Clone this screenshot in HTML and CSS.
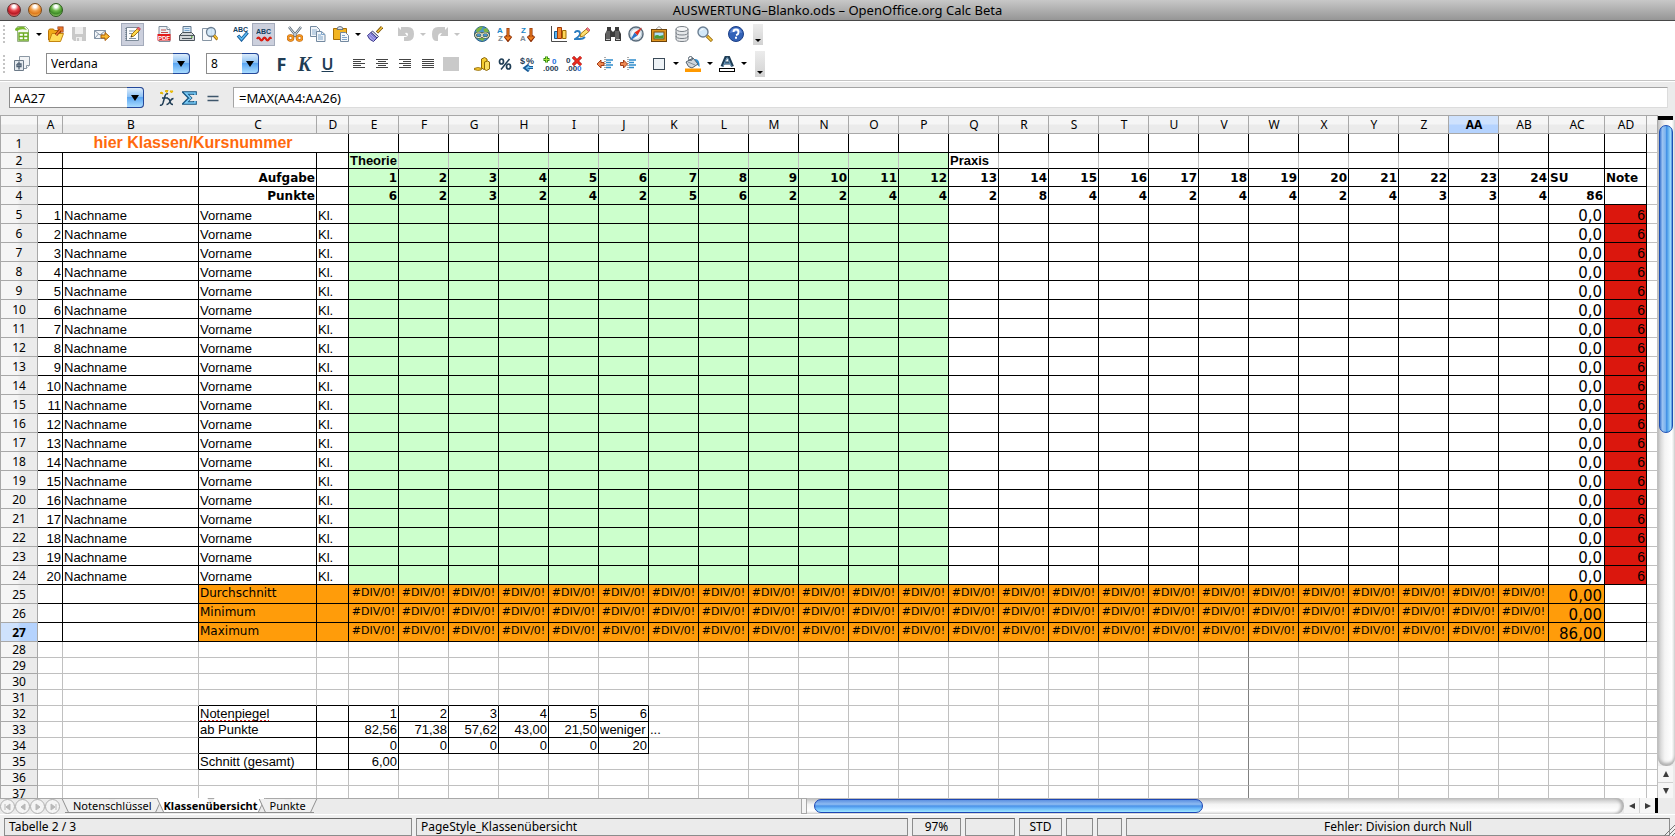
FILE: index.html
```html
<!DOCTYPE html>
<html lang="de">
<head>
<meta charset="utf-8">
<title>AUSWERTUNG–Blanko.ods – OpenOffice.org Calc Beta</title>
<link rel="stylesheet" href="styles.css">
</head>
<body>
<div class="window">
  <header class="titlebar">
    <div class="lights">
      <button class="light light-close" aria-label="Schließen"></button>
      <button class="light light-min" aria-label="Minimieren"></button>
      <button class="light light-max" aria-label="Maximieren"></button>
    </div>
    <h1 class="title">AUSWERTUNG–Blanko.ods – OpenOffice.org Calc Beta</h1>
  </header>

  <div class="toolbars">
    <div class="toolbar toolbar-standard" role="toolbar" aria-label="Standard">
      <span class="grip"></span>
      <button class="tool" aria-label="Neu"><svg viewBox="0 0 16 16"><path d="M1 3q2-3 6-2l-1 2q-3-1-4 2z" fill="#6fae2e"/><path d="M3.500.500h8l3 3v12h-11z" fill="#f4f8f0" stroke="#9ab08a"/><path d="M1 4q3-4 9-3l3 3q-6-2-10 1z" fill="#78b82a"/><path d="M5 7h9v7H5zM5 10.500h9M9.500 7v7" fill="#fff" stroke="#6cab22" stroke-width="1.400"/></svg></button>
      <button class="drop" aria-label="Neu Auswahl"></button>
      <button class="tool" aria-label="Öffnen"><svg viewBox="0 0 16 16"><path d="M.500 14V4.500l1-1.500h4l1 1.500h6V14z" fill="#f0a818" stroke="#b87408"/><path d="M1 15.500l3-8h11.500l-3 8z" fill="#ffdc58" stroke="#c48510"/><path d="M8 9l5-6M9.500 2H14v4.500" fill="none" stroke="#8e2a06" stroke-width="3"/><path d="M8 9l5-6M10 2h4v4" fill="none" stroke="#ef7d2c" stroke-width="1.500"/></svg></button>
      <button class="tool" aria-label="Speichern" disabled><svg viewBox="0 0 16 16"><path d="M1 1h14v14H3l-2-2z" fill="#c9c9c9"/><path d="M4 1h8v7H4zM5 11h6v4H5z" fill="#efefef"/><path d="M6 12h2v3H6z" fill="#c9c9c9"/></svg></button>
      <button class="tool" aria-label="E-Mail"><svg viewBox="0 0 16 16"><path d="M.500 4.500h11v8H.500z" fill="#f2f5f8" stroke="#8393a5"/><path d="M.500 4.500L6 9l5.500-4.500M.500 12.500L4.500 8M11.500 12.500L7.500 8" fill="none" stroke="#8393a5"/><path d="M7 9h4V6.500l4.500 4-4.500 4V12H7z" fill="#f9b932" stroke="#a65a08"/></svg></button>
      <span class="gap"></span>
      <button class="tool is-on" aria-label="Bearbeiten" aria-pressed="true"><svg viewBox="0 0 16 16"><path d="M1.500 1.500h12v13h-12z" fill="#fbfcfd" stroke="#7d8b99"/><path d="M4 5h6M4 7.500h4M4 12.500h7" stroke="#8492a0"/><path d="M1 2v13" stroke="#596878" stroke-dasharray="1 1"/><path d="M6 11l1-3 6-6 2 2-6 6z" fill="#ffd84a" stroke="#a87710"/><path d="M12 2.500l1.500-1.500 2 2L14 4.500z" fill="#ef6a78" stroke="#a82a3c" stroke-width=".600"/><path d="M5.500 11.500l1-2 1 1z" fill="#333"/></svg></button>
      <span class="gap"></span>
      <button class="tool" aria-label="Als PDF exportieren"><svg viewBox="0 0 16 16"><path d="M3 .500h8l3 3v12H3z" fill="#eef1f4" stroke="#7f8e9d"/><path d="M11 .500v3h3" fill="#fff" stroke="#7f8e9d"/><path d="M5 4h5M5 6.500h7" stroke="#c04a4a"/><rect x="1.500" y="8" width="13" height="6.500" fill="#e21b1b"/><text x="2" y="13.500" class="glyph-pdf">PDF</text></svg></button>
      <button class="tool" aria-label="Drucken"><svg viewBox="0 0 16 16"><path d="M4 7V.500h8V7" fill="#dbe9f5" stroke="#63798d"/><path d="M5.500 2.500h5M5.500 4.500h5" stroke="#7ba7cf"/><path d="M.500 9.500l3-3h9l3 3v5H.500z" fill="#d3d6d9" stroke="#4b545c"/><path d="M.500 9.500h15M3 12.500h10" stroke="#4b545c"/><path d="M12 11h1.500" stroke="#4ca82a" stroke-width="1.500"/></svg></button>
      <button class="tool" aria-label="Seitenansicht"><svg viewBox="0 0 16 16"><path d="M.500 2.500h9v12h-9z" fill="#f6f8fa" stroke="#8695a4"/><circle cx="9" cy="6" r="4.500" fill="#cfe5f7" fill-opacity=".900" stroke="#6c7f92" stroke-width="1.300"/><path d="M12 9.500l3.500 4" stroke="#9c6a08" stroke-width="3"/><path d="M12.300 9.500l3 3.500" stroke="#f6c53a" stroke-width="1.500"/></svg></button>
      <span class="gap"></span>
      <button class="tool" aria-label="Rechtschreibung"><svg viewBox="0 0 16 16"><text x="0" y="6" class="glyph-abc">ABC</text><path d="M5 9.500l3.500 4 6-7" fill="none" stroke="#145c9c" stroke-width="3.400"/><path d="M5.500 10l3 3.300 5.500-6.300" fill="none" stroke="#5db9f0" stroke-width="1.700"/></svg></button>
      <button class="tool is-on" aria-label="Automatische Rechtschreibprüfung" aria-pressed="true"><svg viewBox="0 0 16 16"><text x="0" y="8" class="glyph-abc">ABC</text><path d="M1 13q1.500-3 3 0t3 0 3 0 3 0 2 0" fill="none" stroke="#d81e12" stroke-width="2.200"/></svg></button>
      <span class="gap"></span>
      <button class="tool" aria-label="Ausschneiden"><svg viewBox="0 0 16 16"><path d="M2 1l8 10M14 1L6 11" stroke="#5c6b78" stroke-width="2.400"/><path d="M2 1l8 10M14 1L6 11" stroke="#dde6ed"/><circle cx="3.500" cy="12" r="2.500" fill="none" stroke="#b95d06" stroke-width="2.600"/><circle cx="12.500" cy="12" r="2.500" fill="none" stroke="#b95d06" stroke-width="2.600"/><circle cx="3.500" cy="12" r="2.500" fill="none" stroke="#f59a24" stroke-width="1.400"/><circle cx="12.500" cy="12" r="2.500" fill="none" stroke="#f59a24" stroke-width="1.400"/></svg></button>
      <button class="tool" aria-label="Kopieren"><svg viewBox="0 0 16 16"><path d="M.500.500h6l3 3v7h-9z" fill="#f1f5f9" stroke="#7389a0"/><path d="M2 4h5M2 6h5M2 8h4" stroke="#8fb0d0"/><path d="M6.500 5.500h5l3.500 3v7H6.500z" fill="#f1f5f9" stroke="#7389a0"/><path d="M11.500 5.500v3H15M8 9h3M8 11h5M8 13h5" fill="none" stroke="#7fa5ca"/></svg></button>
      <button class="tool" aria-label="Einfügen"><svg viewBox="0 0 16 16"><path d="M.500 2.500h13v11H.500z" fill="#f2b422" stroke="#a66d06"/><path d="M4 3.500q0-3 3-3t3 3z" fill="#dfe3e7" stroke="#68747f"/><path d="M7.500 6.500h5l3 3v6h-8z" fill="#f5f8fa" stroke="#7389a0"/><path d="M9 9.500h3M9 11.500h5M9 13.500h5" stroke="#7fa5ca"/></svg></button>
      <button class="drop" aria-label="Einfügen Auswahl"></button>
      <button class="tool" aria-label="Format übertragen"><svg viewBox="0 0 16 16"><path d="M10 6.500L15 1" stroke="#7b5208" stroke-width="3"/><path d="M10.500 6L15 1.200" stroke="#f6c73c" stroke-width="1.400"/><path d="M5.500 5l6 5.500-1.500 1.500-6-5.500z" fill="#d8dce6" stroke="#3d3f78"/><path d="M4 6.500l6 5.500-3.500 3.500Q2 14 .500 9.500z" fill="#a9a6ee" stroke="#383488"/><path d="M2.500 9l5 5M4 8l5 4.500" stroke="#6f6bc8"/></svg></button>
      <span class="gap"></span>
      <button class="tool" aria-label="Rückgängig" disabled><svg viewBox="0 0 16 16"><path d="M0 1l3 3V1h7q6 0 6 7t-6 7H6v-4h1q3 0 3-3-1-2-3-1l2 3H0z" fill="#c8c8c8"/></svg></button>
      <button class="drop is-off" aria-label="Rückgängig Auswahl" disabled></button>
      <button class="tool" aria-label="Wiederherstellen" disabled><svg viewBox="0 0 16 16"><path d="M16 1l-3 3V1H6Q0 1 0 8t4 7h2v-4q0-4 4-4L8 10h8z" fill="#c8c8c8"/></svg></button>
      <button class="drop is-off" aria-label="Wiederherstellen Auswahl" disabled></button>
      <span class="gap"></span>
      <button class="tool" aria-label="Hyperlink"><svg viewBox="0 0 16 16"><circle cx="8" cy="8" r="7.500" fill="#4a93cc" stroke="#2b5f88"/><path d="M2 4q3-4 7-3.500L7 4 3 7zM9 3l4-1 2 4-4 1zM4 13l3-2 4 1-2 3z" fill="#7cb342"/><rect x="1.500" y="7" width="6.500" height="4.500" rx="2.200" fill="none" stroke="#4e5a35" stroke-width="2.200"/><rect x="8" y="7" width="6.500" height="4.500" rx="2.200" fill="none" stroke="#4e5a35" stroke-width="2.200"/><rect x="1.500" y="7" width="6.500" height="4.500" rx="2.200" fill="none" stroke="#f0f2e6"/><rect x="8" y="7" width="6.500" height="4.500" rx="2.200" fill="none" stroke="#f0f2e6"/></svg></button>
      <button class="tool" aria-label="Aufsteigend sortieren"><svg viewBox="0 0 16 16"><text x="0" y="7" class="glyph-sort sort-a">A</text><text x="1" y="15" class="glyph-sort sort-z">Z</text><path d="M11 2v11M8 10l3 4 3-4" fill="none" stroke="#8b2d04" stroke-width="3"/><path d="M11 2.500v10M8.500 10.500l2.500 3 2.500-3" fill="none" stroke="#f28322" stroke-width="1.300"/></svg></button>
      <button class="tool" aria-label="Absteigend sortieren"><svg viewBox="0 0 16 16"><text x="1" y="7" class="glyph-sort sort-a">Z</text><text x="0" y="15" class="glyph-sort sort-z">A</text><path d="M11 2v11M8 10l3 4 3-4" fill="none" stroke="#8b2d04" stroke-width="3"/><path d="M11 2.500v10M8.500 10.500l2.500 3 2.500-3" fill="none" stroke="#f28322" stroke-width="1.300"/></svg></button>
      <span class="gap"></span>
      <button class="tool" aria-label="Diagramm"><svg viewBox="0 0 16 16"><path d="M.500 0v15.500H16" fill="none" stroke="#4a4a4a"/><path d="M3.500 5.500h3v7h-3z" fill="#5cb4ee" stroke="#165b94"/><path d="M6.500 1.500h4v11h-4z" fill="#f58b2e" stroke="#a13a08"/><path d="M11.500 4.500h3.500v8h-3.500z" fill="#ffd65a" stroke="#a06e06"/></svg></button>
      <button class="tool" aria-label="Zeichenfunktionen"><svg viewBox="0 0 16 16"><path d="M1 7q0-2 2.500-2T6 7.500 1 13h5q3 0 5-2" fill="none" stroke="#2a7cc0" stroke-width="1.800"/><path d="M6 11l1-3.500 6-5 2.500 2.500-6 5z" fill="#ffdf70" stroke="#a67812"/><path d="M12 3l1.500-1.500 2.500 2.500-1.500 1.500z" fill="#f07b88" stroke="#b23a4c" stroke-width=".600"/></svg></button>
      <span class="gap"></span>
      <button class="tool" aria-label="Suchen &amp; Ersetzen"><svg viewBox="0 0 16 16"><path d="M2 1h4v3l2 2 2-2V1h4v3l2 4v7h-6v-4H6v4H0V8l2-4z" fill="#3b3b3b"/><path d="M2 5v8M4 5v8M11 5v8M13 5v8" stroke="#8a8a8a"/><path d="M1 13.500h4M11 13.500h4" stroke="#c4c4c4"/></svg></button>
      <button class="tool" aria-label="Navigator"><svg viewBox="0 0 16 16"><circle cx="8" cy="8" r="7" fill="#f3f7fa" stroke="#5a6c7c" stroke-width="1.500"/><circle cx="8" cy="8" r="5.500" fill="none" stroke="#b4c4d2"/><path d="M14 1.500L9.500 9.500l-3-3z" fill="#e52d1c"/><path d="M2 14.500L6.500 6.500l3 3z" fill="#2b73c8"/></svg></button>
      <button class="tool" aria-label="Gallery"><svg viewBox="0 0 16 16"><path d="M4 4l4-3.500L12 4" fill="none" stroke="#9a9a9a"/><rect x=".500" y="3.500" width="15" height="12" fill="#e0951e" stroke="#6d430a"/><rect x="3" y="6" width="10" height="7" fill="#aee0f8" stroke="#7a4c0b"/><path d="M3.500 12.500V10q3-2 5 0l4-1v3.500z" fill="#4a9a34"/></svg></button>
      <button class="tool" aria-label="Datenquellen"><svg viewBox="0 0 16 16"><path d="M2 3v10q0 2.500 6 2.500t6-2.500V3" fill="#e6e8ea" stroke="#787f86"/><ellipse cx="8" cy="3" rx="6" ry="2.500" fill="#f5f6f7" stroke="#787f86"/><path d="M2 6.500q0 2.500 6 2.500t6-2.500M2 10q0 2.500 6 2.500t6-2.500" fill="none" stroke="#787f86"/></svg></button>
      <button class="tool" aria-label="Zoom"><svg viewBox="0 0 16 16"><circle cx="6" cy="6" r="5" fill="#d3e8f8" stroke="#6c7f92" stroke-width="1.400"/><path d="M3.500 5q1-2 3-2" stroke="#fff" fill="none"/><path d="M10 10l5 5" stroke="#9c6a08" stroke-width="3.200"/><path d="M10.500 10.500l4 4" stroke="#f8cf4a" stroke-width="1.600"/></svg></button>
      <span class="gap"></span>
      <button class="tool" aria-label="Hilfe"><svg viewBox="0 0 16 16"><circle cx="8" cy="8" r="7.500" fill="#3463b8" stroke="#1c3f86"/><path d="M2 7q1-5 6-5t6 5q-6-2-12 0z" fill="#5f88d4"/><path d="M5.500 6q0-2.500 2.500-2.500T10.500 6 8 9.200" fill="none" stroke="#fff" stroke-width="1.900"/><path d="M7 10.800h2v2H7z" fill="#fff"/></svg></button>
      <button class="overflow" aria-label="Weitere Symbole"></button>
    </div>

    <div class="toolbar toolbar-format" role="toolbar" aria-label="Format">
      <span class="grip"></span>
      <button class="tool" aria-label="Formatvorlagen"><svg viewBox="0 0 16 16"><path d="M5.500.500h10v9l-3 3h-7z" fill="#f2f4f6" stroke="#8b97a3"/><path d="M15.500 9.500h-3v3" fill="#fff" stroke="#8b97a3"/><path d="M.500 4.500h9v10h-9z" fill="#e4e9ee" stroke="#6d7b89"/><path d="M5 5.500v8M3 8v2.500h4V8h-4" fill="none" stroke="#4e6072" stroke-width="1.300"/></svg></button>
      <span class="combo combo-font"><input type="text" value="Verdana" aria-label="Schriftname"><button class="combo-btn" aria-label="Schriftname öffnen"></button></span>
      <span class="combo combo-size"><input type="text" value="8" aria-label="Schriftgröße"><button class="combo-btn" aria-label="Schriftgröße öffnen"></button></span>
      <button class="tool face" aria-label="Fett">F</button>
      <button class="tool face face-italic" aria-label="Kursiv">K</button>
      <button class="tool face face-under" aria-label="Unterstrichen">U</button>
      <span class="gap"></span>
      <button class="tool" aria-label="Linksbündig"><svg viewBox="0 0 16 16"><path d="M2 3.500h12M2 5.500h8M2 7.500h12M2 9.500h8M2 11.500h12" stroke="#444"/></svg></button>
      <button class="tool" aria-label="Zentriert"><svg viewBox="0 0 16 16"><path d="M2 3.500h12M4 5.500h8M2 7.500h12M4 9.500h8M2 11.500h12" stroke="#444"/></svg></button>
      <button class="tool" aria-label="Rechtsbündig"><svg viewBox="0 0 16 16"><path d="M2 3.500h12M6 5.500h8M2 7.500h12M6 9.500h8M2 11.500h12" stroke="#444"/></svg></button>
      <button class="tool" aria-label="Blocksatz"><svg viewBox="0 0 16 16"><path d="M2 3.500h12M2 5.500h12M2 7.500h12M2 9.500h12M2 11.500h12" stroke="#444"/></svg></button>
      <button class="tool" aria-label="Zellen verbinden" disabled><svg viewBox="0 0 16 16"><path d="M0 1h16v14H0z" fill="#c9c9c9"/></svg></button>
      <span class="gap"></span>
      <button class="tool" aria-label="Währung"><svg viewBox="0 0 16 16"><path d="M7.500 3l3-1.500L13 3v9l-3 1.500L7.500 12z" fill="#f6cc2e" stroke="#8c6606"/><path d="M10.500 6l3-1 2 1v7l-3 1.500-2-1z" fill="#f9dc5e" stroke="#8c6606"/><path d="M0 12.500q4-2 8 0l-1 1.500q-3 1-7-.500z" fill="#f9c82c" stroke="#8c6606" stroke-width=".800"/></svg></button>
      <button class="tool" aria-label="Prozent"><svg viewBox="0 0 16 16"><ellipse cx="4.500" cy="5.500" rx="2" ry="2.500" fill="none" stroke="#1f3d55" stroke-width="1.700"/><ellipse cx="11.500" cy="10.500" rx="2" ry="2.500" fill="none" stroke="#1f3d55" stroke-width="1.700"/><path d="M12.500 3L4 13.500" stroke="#1f3d55" stroke-width="1.500"/></svg></button>
      <button class="tool" aria-label="Standardformat"><svg viewBox="0 0 16 16"><text x="0" y="8" class="glyph-num">$</text><text x="6" y="8" class="glyph-num">%</text><path d="M13 11.500H8M9 9l-4 3 4 3" fill="none" stroke="#1a5b96" stroke-width="3"/><path d="M13 11.500H7M9 10l-2.500 2L9 14" fill="none" stroke="#6cc0f2" stroke-width="1.200"/></svg></button>
      <button class="tool" aria-label="Dezimalstelle hinzufügen"><svg viewBox="0 0 16 16"><path d="M3.500.500v6M.500 3.500h6" stroke="#2f8a10" stroke-width="3"/><path d="M3.500 1v5M1 3.500h5" stroke="#a8e23c" stroke-width="1.200"/><text x="9" y="8" class="glyph-dec dec-hi">0</text><text x="0" y="15" class="glyph-dec">.000</text></svg></button>
      <button class="tool" aria-label="Dezimalstelle löschen"><svg viewBox="0 0 16 16"><text x="0" y="7" class="glyph-dec">0</text><text x="0" y="15" class="glyph-dec">.00</text><text x="11" y="15" class="glyph-dec dec-hi">0</text><path d="M7 1l8 8M15 1L7 9" stroke="#8d0808" stroke-width="3"/><path d="M7 1l8 8M15 1L7 9" stroke="#f02c20" stroke-width="1.800"/></svg></button>
      <span class="gap"></span>
      <button class="tool" aria-label="Einzug vermindern"><svg viewBox="0 0 16 16"><path d="M8 1v14" stroke="#555" stroke-dasharray="1 1"/><path d="M9 4h7M9 6.500h5M9 9h7M9 11.500h5" stroke="#2f8ccc" stroke-width="1.500"/><path d="M0 8l4-4v2.500h3v3H4V12z" fill="#f08a52" stroke="#97300a" stroke-width=".900"/></svg></button>
      <button class="tool" aria-label="Einzug erhöhen"><svg viewBox="0 0 16 16"><path d="M8 1v14" stroke="#555" stroke-dasharray="1 1"/><path d="M9 4h7M9 6.500h5M9 9h7M9 11.500h5" stroke="#2f8ccc" stroke-width="1.500"/><path d="M7.500 8l-4-4v2.500h-3v3h3V12z" fill="#f08a52" stroke="#97300a" stroke-width=".900"/></svg></button>
      <span class="gap"></span>
      <button class="tool" aria-label="Umrandung"><svg viewBox="0 0 16 16"><rect x="2.500" y="2.500" width="11" height="11" fill="#eef3f7" stroke="#3b4a58"/></svg></button>
      <button class="drop" aria-label="Umrandung Auswahl"></button>
      <button class="tool" aria-label="Hintergrundfarbe"><svg viewBox="0 0 16 16"><path d="M9 3q6-1 5.500 8l-3-3z" fill="#2c8ed2"/><path d="M1 6l7-4 5 6-6 4q-4 0-6-6z" fill="#cfd6dc" stroke="#51606d"/><path d="M3 6l7 3" stroke="#7e8c98"/><circle cx="5.500" cy="2.500" r="2" fill="none" stroke="#51606d"/><path d="M0 12.500h16v3.500H0z" fill="#ff9900"/></svg></button>
      <button class="drop" aria-label="Hintergrundfarbe Auswahl"></button>
      <button class="tool" aria-label="Schriftfarbe"><svg viewBox="0 0 16 16"><path d="M3 10.500L7 1h2.500l4 9.500M5 7h7" fill="none" stroke="#1f3d55" stroke-width="3"/><path d="M4 10.500L7.800 1.800h.800l3.900 8.700M5 7.200h6" fill="none" stroke="#6f9cc0"/><rect x=".500" y="12.500" width="15" height="3" fill="#fff" stroke="#000"/></svg></button>
      <button class="drop" aria-label="Schriftfarbe Auswahl"></button>
      <button class="overflow overflow-tall" aria-label="Weitere Symbole"></button>
    </div>
  </div>

  <div class="formula-bar">
    <span class="combo combo-name"><input type="text" value="AA27" aria-label="Namensfeld"><button class="combo-btn" aria-label="Namensfeld öffnen"></button></span>
    <button class="tool" aria-label="Funktions-Assistent"><svg viewBox="0 0 16 16"><path d="M1 3l2-1 1 2zM6 1l2 1.500L9 0zM11 1l1.500 2L14 1z" fill="#f7d11c" stroke="#e3b400"/><path d="M1 15q2 1 3-2l2-7q1-3 3-2M3 8h6" fill="none" stroke="#1f3d55" stroke-width="1.500"/><path d="M8.500 8.500q2 0 2.500 3t3 3M14.500 8.500q-2 0-3.500 3t-3.500 3" fill="none" stroke="#1f3d55" stroke-width="1.500"/></svg></button>
    <button class="tool" aria-label="Summe"><svg viewBox="0 0 16 16"><path d="M13 5V3H3l5 5-5 5h10v-2" fill="none" stroke="#12527f" stroke-width="3.600"/><path d="M13 5V3H3.500l5 5-5 5H13v-2" fill="none" stroke="#7ccdf8" stroke-width="1.600"/></svg></button>
    <button class="tool" aria-label="Funktion"><svg viewBox="0 0 16 16"><path d="M2.500 6.500h11M2.500 10.500h11" stroke="#3e566b" stroke-width="1.600"/></svg></button>
    <input class="formula" type="text" value="=MAX(AA4:AA26)" aria-label="Eingabezeile">
  </div>

  <main class="sheet">
    <div class="sheet-view"><table class="grid" id="grid"></table></div>
    <div class="vscroll" role="scrollbar" aria-orientation="vertical" aria-controls="grid" aria-valuenow="0">
      <span class="split-handle"></span>
      <div class="vtrack"><div class="vthumb"></div></div>
      <button class="arrow" aria-label="Nach oben"><svg viewBox="0 0 8 8"><path d="M4 1l3 6H1z"/></svg></button>
      <button class="arrow" aria-label="Nach unten"><svg viewBox="0 0 8 8"><path d="M4 7l3-6H1z"/></svg></button>
    </div>
  </main>

  <div class="tabbar">
    <div class="tabs-area">
      <button class="nav" aria-label="Erste Tabelle"><svg viewBox="0 0 8 8"><path d="M1 1v6M6 1v6L2 4z"/></svg></button>
      <button class="nav" aria-label="Vorherige Tabelle"><svg viewBox="0 0 8 8"><path d="M6 1v6L2 4z"/></svg></button>
      <button class="nav" aria-label="Nächste Tabelle"><svg viewBox="0 0 8 8"><path d="M2 1v6l4-3z"/></svg></button>
      <button class="nav" aria-label="Letzte Tabelle"><svg viewBox="0 0 8 8"><path d="M7 1v6M2 1v6l4-3z"/></svg></button>
      <nav class="tabs">
        <button class="tab">Notenschlüssel</button>
        <button class="tab is-active">Klassenübersicht</button>
        <button class="tab">Punkte</button>
      </nav>
    </div>
    <span class="splitter"></span>
    <div class="hscroll" role="scrollbar" aria-orientation="horizontal" aria-controls="grid" aria-valuenow="0">
      <div class="htrack"><div class="hthumb"></div></div>
      <button class="arrow" aria-label="Nach links"><svg viewBox="0 0 8 8"><path d="M1 4l6-3v6z"/></svg></button>
      <button class="arrow" aria-label="Nach rechts"><svg viewBox="0 0 8 8"><path d="M7 4L1 1v6z"/></svg></button>
      <span class="hsplit"></span>
    </div>
    <span class="corner"></span>
  </div>

  <footer class="status">
    <span class="field">Tabelle 2 / 3</span>
    <span class="field">PageStyle_Klassenübersicht</span>
    <span class="field center">97%</span>
    <span class="field"></span>
    <span class="field center">STD</span>
    <span class="field"></span>
    <span class="field"></span>
    <span class="field center">Fehler: Division durch Null</span>
    <svg class="resize" viewBox="0 0 12 12"><path d="M1 12L12 1M5 12l7-7M9 12l3-3" stroke="#777" fill="none"/></svg>
  </footer>
</div>
<script src="script.js"></script>
</body>
</html>
```
FILE: styles.css
```css
* { box-sizing: border-box; }

html, body { height: 100%; margin: 0; }

body {
  overflow: hidden;
  background: #ebebeb;
  color: #000;
  font: 12px/16px "Noto Sans", "Open Sans", sans-serif;
}

button, input { font: inherit; color: inherit; margin: 0; padding: 0; border: 0; background: none; }
button { display: flex; align-items: center; justify-content: center; flex: none; }

.window { display: flex; flex-direction: column; height: 100%; }

/* Title bar */
.titlebar {
  position: relative;
  display: flex;
  align-items: center;
  justify-content: center;
  flex: none;
  height: 21px;
  border-bottom: 1px solid #484848;
  background: linear-gradient(#c8c8c8, #969696);
}
.title { margin: 0; font-size: 13px; line-height: 20px; font-weight: 400; }
.lights { position: absolute; left: 7px; top: 3px; display: flex; gap: 7px; }
.light { width: 14px; height: 14px; border: 1px solid #5e3030; border-radius: 50%; }
.light-close { background: radial-gradient(circle at 50% 20%, #fff 0 12%, #e8454c 40%, #b81824 65%, #ff9c94 100%); }
.light-min { border-color: #7c4a1c; background: radial-gradient(circle at 50% 20%, #fff 0 12%, #f3a04a 40%, #dd7a1c 65%, #ffe28c 100%); }
.light-max { border-color: #2c5a1c; background: radial-gradient(circle at 50% 20%, #fff 0 12%, #6cb84a 40%, #3f8c28 65%, #c8f59a 100%); }

/* Toolbars */
.toolbars { flex: none; border-bottom: 1px solid #c4c4c4; background: #fff; }
.toolbar { display: flex; align-items: center; }
.toolbar-standard { height: 26px; }
.toolbar-format { height: 33px; }
.grip {
  width: 2px;
  height: 18px;
  margin: 0 5px 0 3px;
  background: repeating-linear-gradient(#c4c4c4 0 2px, transparent 2px 4px);
}
.tool { width: 23px; height: 23px; }
.tool svg { width: 16px; height: 16px; }
.tool.is-on { border: 1px solid #a4abbb; background: #ccd0dd; }
.gap { flex: none; width: 8px; }
.drop { width: 11px; height: 23px; }
.drop::before, .combo-btn::before, .overflow::before {
  content: "";
  border: 3px solid transparent;
  border-top-color: #000;
  border-bottom: 0;
}
.drop.is-off::before { border-top-color: #c4c4c4; }
.overflow {
  width: 10px;
  height: 21px;
  margin-left: 6px;
  padding-bottom: 3px;
  align-items: flex-end;
  background: linear-gradient(#ececec, #d2d2d2);
}
.overflow-tall { height: 26px; }

.glyph-abc { font: bold 7px "Liberation Sans", sans-serif; fill: #14405f; }
.glyph-pdf { font: bold 6px "Liberation Sans", sans-serif; fill: #fff; }
.glyph-sort { font: bold 8px "Liberation Sans", sans-serif; }
.sort-a { fill: #1c86c8; }
.sort-z { fill: #7b8894; }
.glyph-num { font: bold 9px "Liberation Sans", sans-serif; fill: #1f3d55; }
.glyph-dec { font: bold 8px "Liberation Sans", sans-serif; fill: #1f3d55; }
.dec-hi { fill: #1d6fe0; }

.face { color: #1f3d55; font-size: 18px; font-weight: 700; }
.face-italic { font-family: "Liberation Serif", serif; font-size: 20px; font-style: italic; }
.face-under { font-size: 16px; font-weight: 600; text-decoration: underline; }

/* Combo boxes */
.combo {
  display: flex;
  flex: none;
  height: 21px;
  border: 1px solid #8c8c8c;
  border-right: 0;
  border-radius: 0 4px 4px 0;
  background: #fff;
}
.combo input { flex: 1; min-width: 0; padding-left: 4px; }
.combo-btn {
  width: 17px;
  height: 21px;
  margin-top: -1px;
  border: 1px solid #24489a;
  border-left: 0;
  border-radius: 0 4px 4px 0;
  background: linear-gradient(#dcecfb, #8fc3f5 45%, #5ba6f2 50%, #a9dcff);
}
.combo-btn::before { border-width: 6px 4px 0; }
.combo-font { width: 144px; margin: 0 16px 0 13px; }
.combo-size { width: 53px; margin-right: 11px; }
.combo-name { width: 135px; margin-right: 11px; }

/* Formula bar */
.formula-bar {
  display: flex;
  align-items: center;
  flex: none;
  height: 34px;
  padding: 0 7px 2px 9px;
  border-top: 1px solid #fff;
  background: #ebebeb;
  font-size: 13px;
}
.formula {
  flex: 1;
  min-width: 0;
  height: 21px;
  margin-left: 9px;
  padding-left: 5px;
  border: 1px solid #dcdcdc;
  border-top-color: #a4a4a4;
  border-left-color: #a4a4a4;
  background: #fff;
}

/* Sheet */
.sheet { display: flex; flex: 1; min-height: 0; }
.sheet-view { flex: 1; min-width: 0; overflow: hidden; background: #fff; }
.grid { width: 100%; border-collapse: separate; border-spacing: 0; table-layout: fixed; }
.grid th, .grid td {
  height: 16px;
  padding: 0 1px;
  border: solid #c0c0c0;
  border-width: 0 1px 1px 0;
  overflow: hidden;
  white-space: nowrap;
  line-height: 15px;
  font-family: "Liberation Sans", Arial, sans-serif;
  font-size: 13px;
  font-weight: 400;
  text-align: left;
  vertical-align: bottom;
}
.grid thead th, .grid tbody th {
  padding: 0;
  border-color: #a8a8a8;
  background: linear-gradient(#f6f6f6 0 45%, #ebebeb 55%);
  font-family: "Noto Sans", sans-serif;
  font-size: 12px;
  text-align: center;
  vertical-align: middle;
}
.grid tbody th { background: linear-gradient(90deg, #f5f5f5 0 45%, #ebebeb 55%); }
.grid tr > th:first-child { border-left-width: 1px; }
.grid thead th { height: 19px; padding-left: 1px; border-top-width: 1px; }
.grid thead th.is-current { background: linear-gradient(#cfe2fd 0 45%, #b5d3fe 55%); font-weight: 700; }
.grid tbody th.is-current { background: linear-gradient(90deg, #cfe2fd 0 45%, #b5d3fe 55%); font-weight: 700; }
.grid .h18 > * { height: 18px; }
.grid .h19 > * { height: 19px; }

.grid td.box { border-color: #000; }
.grid td.open { border-right-color: #c0c0c0; }
.grid td.edge-r { border-right-color: #000; }
.grid td.edge-b { border-bottom-color: #000; }
.grid td.break { border-right-color: #808080; }
.grid td.right { text-align: right; }
.grid td.green { background: #ccffcc; }
.grid td.orange { background: #ff9c0a; }
.grid td.red { background: #db170d; font-size: 14px; }
.grid td.bold { font-weight: 700; }
.grid td.verdana { font-family: "DejaVu Sans", Verdana, sans-serif; font-size: 12px; }
.grid td.orange.verdana { vertical-align: top; line-height: 17px; }
.grid td.error { padding: 0; font-family: "DejaVu Sans", Verdana, sans-serif; font-size: 11px; text-align: center; vertical-align: top; line-height: 16px; }
.grid td.sum { padding-right: 2px; font-family: "DejaVu Sans", Verdana, sans-serif; font-size: 15px; line-height: 13px; text-align: right; }
.grid td.heading { color: #ff6a0d; font-size: 16px; font-weight: 700; line-height: 18px; text-align: center; }
.misspelt {
  display: inline-block;
  background: repeating-linear-gradient(90deg, #e0201c 0 2px, transparent 2px 4px) 0 100% / 100% 1px no-repeat;
}

/* Scroll bars */
.vscroll { display: flex; flex-direction: column; flex: none; width: 17px; background: #ebebeb; }
.split-handle { height: 4px; margin: 1px 2px 0 0; background: #000; }
.vtrack {
  flex: 1;
  padding: 5px 2px 0 1px;
  border-radius: 0 0 8px 8px;
  box-shadow: inset 0 -3px 3px #b0b0b0;
  background: linear-gradient(90deg, #c9c9c9, #f4f4f4 40%, #fff 80%, #e6e6e6);
}
.vthumb {
  height: 48%;
  border: 1px solid #1c4fb4;
  border-radius: 7px;
  background: linear-gradient(90deg, #3f78d0, #9cc4f2 20%, #7db4ef 45%, #3f8fe4 55%, #9ee0ff 90%, #3f78d0);
}
.arrow { width: 15px; height: 16px; background: #f6f6f6; }
.arrow svg { width: 8px; height: 8px; fill: #3c3c3c; }
.arrow + .arrow { border-top: 1px solid #d0d0d0; }

.tabbar { display: flex; flex: none; height: 16px; background: #ebebeb; }
.tabs-area { position: relative; z-index: 0; display: flex; flex: 48; border-top: 1px solid #a8a8a8; }
.nav { width: 15px; height: 15px; border: 1px solid #b0b0b0; border-radius: 50%; background: #f4f4f4; }
.nav svg { width: 8px; height: 8px; fill: #b8b8b8; stroke: #b8b8b8; stroke-width: 1; }
.tabs { display: flex; margin-left: 5px; }
.tab {
  position: relative;
  height: 14px;
  padding: 0 8px;
  border-bottom: 1px solid #8f8f8f;
  font-size: 11px;
  line-height: 13px;
}
.tab::before, .tab::after {
  content: "";
  position: absolute;
  z-index: -1;
  top: 0;
  bottom: -1px;
  background: #f0f0f0;
}
.tab::before { left: 0; right: 50%; border-left: 1px solid #8f8f8f; transform: skewX(25deg); }
.tab::after { left: 50%; right: 0; border-right: 1px solid #8f8f8f; transform: skewX(-25deg); }
.tab.is-active { padding: 0 4px; font-weight: 700; }
.tab.is-active::before, .tab.is-active::after { top: -1px; background: #fff; }

.splitter { flex: none; width: 6px; border: 1px solid #a8a8a8; background: #f4f4f4; }
.hscroll { display: flex; flex: 51; }
.htrack {
  flex: 1;
  padding: 1px 0 1px 7px;
  border-radius: 0 8px 8px 0;
  box-shadow: inset -3px 0 3px #b0b0b0;
  background: linear-gradient(#c0c0c0, #f4f4f4 40%, #fff 80%, #e6e6e6);
}
.hthumb {
  width: 48%;
  height: 14px;
  border: 1px solid #1c46b4;
  border-radius: 7px;
  background: linear-gradient(#5b8fe0, #8fbcf2 35%, #4a92e8 50%, #6cb8fa 70%, #a0e8ff);
}
.hscroll .arrow { height: 15px; }
.hscroll .arrow + .arrow { width: 16px; border-top: 0; border-left: 1px solid #d0d0d0; }
.hsplit { width: 3px; margin-bottom: 1px; background: #000; }
.corner { flex: none; width: 17px; }

/* Status bar */
.status {
  position: relative;
  display: grid;
  grid-template-columns: 408fr 492fr 49px 50px 43px 27px 25px 544fr;
  gap: 4px;
  flex: none;
  height: 22px;
  padding: 3px 5px 1px 4px;
  border-top: 1px solid #fff;
  background: #efefef;
}
.field {
  min-width: 0;
  padding: 0 4px;
  border: 1px solid #8c8c8c;
  border-top-color: #666;
  background: #ebebeb;
  white-space: nowrap;
  line-height: 16px;
}
.center { text-align: center; }
.resize { position: absolute; right: 0; bottom: 0; width: 12px; height: 12px; }
```
FILE: script.js
```js
const letter = i => (i < 26 ? '' : 'A') + String.fromCharCode(65 + (i % 26));
const COLS = 31;
const E = 4, P = 15, Q = 16, V = 21, AB = 27, AC = 28, AD = 29;
const widths = [38, 25, 136, 118, 32, ...Array(24).fill(50), 56, 42];
const points = [6, 2, 3, 2, 4, 2, 5, 6, 2, 2, 4, 4, 2, 8, 4, 4, 2, 4, 4, 2, 4, 3, 3, 4];
const labels = { 25: 'Durchschnitt', 26: 'Minimum', 27: 'Maximum' };
const summary = {
  32: ['Notenpiegel', '', '1', '2', '3', '4', '5', '6'],
  33: ['ab Punkte', '', '82,56', '71,38', '57,62', '43,00', '21,50', 'weniger', '...'],
  34: ['', '', '0', '0', '0', '0', '0', '20'],
  35: ['Schnitt (gesamt)', '', '6,00']
};

function cell(r, c) {
  const task = c >= E && c <= AB;
  const green = c >= E && c <= P ? ' green' : '';
  if (c > AD) return ['', ''];
  if (r === 1) return ['', 'box'];
  if (r === 2) {
    const open = task && c !== P && c !== AB ? ' open' : '';
    return [c === E ? 'Theorie' : c === Q ? 'Praxis' : '', 'box bold' + green + open];
  }
  if (r === 3 || r === 4) {
    let text = '';
    let cls = 'box bold verdana' + green;
    if (c === 2) text = r === 3 ? 'Aufgabe' : 'Punkte';
    if (task) text = r === 3 ? c - E + 1 : points[c - E];
    if (c === AC) text = r === 3 ? 'SU' : '86';
    if (c === AD && r === 3) text = 'Note';
    if (!(r === 3 && c >= AC)) cls += ' right';
    return [text, cls];
  }
  if (r <= 24) {
    if (c === 0) return [r - 4, 'box right'];
    if (c === AC) return ['0,0', 'box sum'];
    if (c === AD) return ['6', 'box red right'];
    return [['', 'Nachname', 'Vorname', 'Kl.'][c] || '', 'box' + green];
  }
  if (r <= 27) {
    if (c < 2 || c === AD) return ['', 'box'];
    if (c === AC) return [r === 27 ? '86,00' : '0,00', 'box orange sum'];
    if (task) return ['#DIV/0!', 'box orange error'];
    return [c === 2 ? labels[r] : '', 'box orange verdana'];
  }
  let cls = c === V ? 'break' : '';
  const last = r === 35 ? E : 9;
  if (r >= 32 && r <= 35) {
    const text = (summary[r][c - 2]) || '';
    if (c === 1) cls += ' edge-r';
    if (c >= 2 && c <= last) cls += ' box';
    if (c >= E && c <= 9 && text !== 'weniger') cls += ' right';
    return [text, cls];
  }
  if (r === 31 && c >= 2 && c <= 9) cls += ' edge-b';
  return ['', cls];
}

function build() {
  const cols = widths.map(w => `<col style="width:${w}px">`).join('') + '<col>';
  let head = '<th></th>';
  for (let c = 0; c < COLS; c++) {
    const name = c > AD ? '' : letter(c);
    head += `<th scope="col"${name === 'AA' ? ' class="is-current"' : ''}>${name}</th>`;
  }
  let body = '';
  for (let r = 1; r <= 37; r++) {
    const size = r === 1 || (r > 4 && r < 28) ? 'h19' : r === 3 || r === 4 ? 'h18' : '';
    body += `<tr class="${size}"><th scope="row"${r === 27 ? ' class="is-current"' : ''}>${r}</th>`;
    let c = 0;
    if (r === 1) {
      body += '<td class="box heading" colspan="4">hier Klassen/Kursnummer</td>';
      c = 4;
    }
    for (; c < COLS; c++) {
      const [text, cls] = cell(r, c);
      const html = text === 'Notenpiegel' ? `<span class="misspelt">${text}</span>` : text;
      body += `<td class="${cls}">${html}</td>`;
    }
    body += '</tr>';
  }
  document.getElementById('grid').innerHTML =
    `<colgroup>${cols}</colgroup><thead><tr>${head}</tr></thead><tbody>${body}</tbody>`;
}

build();
```
